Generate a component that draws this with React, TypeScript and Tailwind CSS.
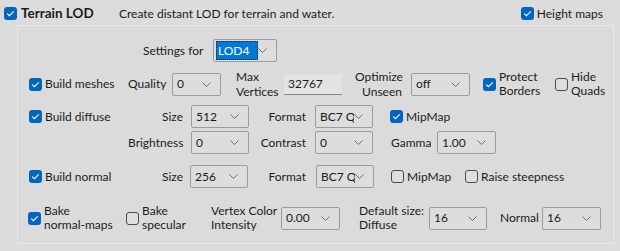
import React from 'react';

function Box({ checked }: { checked: boolean }) {
  if (checked) {
    return (
      <span className="w-[13px] h-[13px] shrink-0 rounded-[3px] bg-[#0067c0] flex items-center justify-center">
        <svg width="9" height="7" viewBox="0 0 9 7" fill="none">
          <path d="M1.2 3.6 L3.4 5.7 L7.8 1.3" stroke="white" strokeWidth="1.1" />
        </svg>
      </span>
    );
  }
  return <span className="w-[13px] h-[13px] shrink-0 rounded-[3px] border border-[#4a4a4a] bg-[#dedede]" />;
}

function Check({ checked, children, className = '' }: { checked: boolean; children: React.ReactNode; className?: string }) {
  return (
    <div className={`flex items-center gap-[3px] shrink-0 ${className}`}>
      <Box checked={checked} />
      <span className="leading-[14px] whitespace-nowrap">{children}</span>
    </div>
  );
}

function Chevron() {
  return (
    <svg width="9" height="5" viewBox="0 0 9 5" fill="none" className="shrink-0">
      <path d="M0.5 0.5 L4.5 4.5 L8.5 0.5" stroke="#6d6d6d" strokeWidth="1" />
    </svg>
  );
}

function Combo({ value, className = '' }: { value: string; className?: string }) {
  return (
    <div
      className={`h-[23px] shrink-0 border border-[#9c9c9c] rounded-[2px] bg-[#dddddd] flex items-center pl-[4px] pr-[9px] ${className}`}
    >
      <span className="flex-1 overflow-hidden whitespace-nowrap text-[#1a1a1a]">{value}</span>
      <Chevron />
    </div>
  );
}

export default function App() {
  return (
    <div className="w-[620px] h-[251px] bg-[#dcdcdc] text-[12px] text-[#1b1b1b] font-['Lato',sans-serif] overflow-hidden">
      {/* ── Header ── */}
      <div className="flex items-center h-[13px] mt-[7px] pl-[4px]">
        <Box checked />
        <span className="ml-[4px] text-[13.5px] font-bold w-[98px]">Terrain LOD</span>
        <span className="whitespace-nowrap">Create distant LOD for terrain and water.</span>
        <Check checked className="ml-auto mr-[17px]">Height maps</Check>
      </div>

      {/* ── Settings panel ── */}
      <div className="ml-[17px] mr-[6px] mt-[5px] h-[219px] border border-[#e8e8e8] bg-[#dbdbdb]">
        {/* Settings for */}
        <div className="flex items-center h-[23px] mt-[13px]">
          <span className="ml-[125px] w-[70px]">Settings for</span>
          <div className="h-[23px] w-[64px] border border-[#9c9c9c] rounded-[2px] bg-[#dddddd] flex items-center pl-[2px] pr-[9px]">
            <span className="h-[19px] w-[42px] bg-[#0078d7] text-white border border-dotted border-[#222] flex items-center pl-[1px] leading-none">
              LOD4
            </span>
            <span className="flex-1" />
            <Chevron />
          </div>
        </div>

        {/* Build meshes */}
        <div className="flex items-center h-[24px] mt-[10px]">
          <Check checked className="ml-[11px] w-[99px]">Build meshes</Check>
          <span className="w-[44px]">Quality</span>
          <Combo value="0" className="w-[49px]" />
          <span className="ml-[15px] w-[48px] leading-[15px]">
            Max
            <br />
            Vertices
          </span>
          <div className="w-[58px] h-[21px] bg-[#e3e3e3] border-b border-[#878787] flex items-center pl-[4px]">32767</div>
          <span className="ml-[13px] w-[47px] text-right leading-[15px]">
            Optimize
            <br />
            Unseen
          </span>
          <Combo value="off" className="ml-[9px] w-[59px]" />
          <Check checked className="ml-[13px] w-[72px]">
            Protect
            <br />
            Borders
          </Check>
          <Check checked={false}>
            Hide
            <br />
            Quads
          </Check>
        </div>

        {/* Build diffuse */}
        <div className="flex items-center h-[23px] mt-[9px]">
          <Check checked className="ml-[11px] w-[99px]">Build diffuse</Check>
          <span className="w-[55px] text-right">Size</span>
          <Combo value="512" className="ml-[8px] w-[58px]" />
          <span className="w-[57px] text-right">Format</span>
          <Combo value="BC7 Qu" className="ml-[9px] w-[58px]" />
          <Check checked className="ml-[17px]">MipMap</Check>
        </div>
        <div className="flex items-center h-[23px] mt-[3px]">
          <span className="ml-[110px] w-[55px] text-right">Brightness</span>
          <Combo value="0" className="ml-[8px] w-[58px]" />
          <span className="w-[57px] text-right">Contrast</span>
          <Combo value="0" className="ml-[9px] w-[58px]" />
          <span className="ml-[18px] w-[46px]">Gamma</span>
          <Combo value="1.00" className="w-[59px]" />
        </div>

        {/* Build normal */}
        <div className="flex items-center h-[23px] mt-[11px]">
          <Check checked className="ml-[11px] w-[99px]">Build normal</Check>
          <span className="w-[55px] text-right">Size</span>
          <Combo value="256" className="ml-[7px] w-[58px]" />
          <span className="w-[58px] text-right">Format</span>
          <Combo value="BC7 Qu" className="ml-[10px] w-[58px]" />
          <Check checked={false} className="ml-[17px] w-[74px]">MipMap</Check>
          <Check checked={false}>Raise steepness</Check>
        </div>

        {/* Bake */}
        <div className="flex items-center h-[26px] mt-[17px]">
          <Check checked className="ml-[10px] w-[98px]">
            Bake
            <br />
            normal-maps
          </Check>
          <Check checked={false} className="w-[85px]">
            Bake
            <br />
            specular
          </Check>
          <span className="w-[70px] leading-[14px] whitespace-nowrap">
            Vertex Color
            <br />
            Intensity
          </span>
          <Combo value="0.00" className="w-[59px]" />
          <span className="ml-[19px] w-[70px] leading-[14px] whitespace-nowrap">
            Default size:
            <br />
            Diffuse
          </span>
          <Combo value="16" className="w-[58px]" />
          <span className="ml-[13px] w-[42px]">Normal</span>
          <Combo value="16" className="w-[59px]" />
        </div>
      </div>
    </div>
  );
}
